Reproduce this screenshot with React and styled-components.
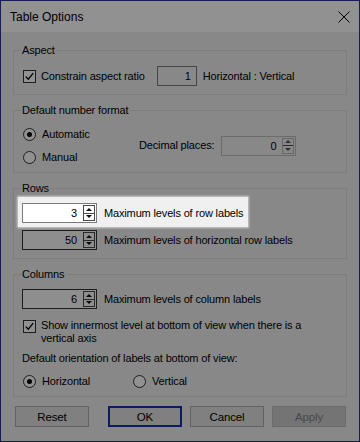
import styled, { createGlobalStyle } from "styled-components";

const GlobalStyle = createGlobalStyle`
  html, body {
    margin: 0;
    padding: 0;
    background: #f0f0f0;
  }
  body {
    font-family: "Liberation Sans", Arial, sans-serif;
    font-size: 11px;
    letter-spacing: -0.15px;
    color: #000;
  }
`;

const Dialog = styled.div`
  width: 360px;
  height: 442px;
  box-sizing: border-box;
  border: 1px solid #26349c;
  background: #f0f0f0;
  display: flex;
  flex-direction: column;
`;
const TitleBar = styled.div`
  height: 31px;
  background: #ffffff;
  display: flex;
  align-items: center;
  padding: 0 9px 0 9px;
  font-size: 12px;
  letter-spacing: 0;
  flex-shrink: 0;
`;
const Title = styled.div`
  flex: 1;
  padding-top: 1px;
`;
const CloseIcon = styled.svg`
  width: 12px;
  height: 12px;
`;
const Body = styled.div`
  flex: 1;
  padding: 11px 12px 0 12px;
  display: flex;
  flex-direction: column;
`;
const Group = styled.fieldset`
  margin: ${(p) => p.mt || 0}px 0 0 0;
  border: 1px solid #dcdcdc;
  padding: ${(p) => p.pt || 9}px 8px ${(p) => p.pb || 8}px 8px;
  min-width: 0;
`;
const Legend = styled.legend`
  padding: 0 1px;
  margin-left: -1px;
  line-height: 14px;
`;
const Row = styled.div`
  display: flex;
  align-items: ${(p) => (p.top ? "flex-start" : "center")};
  gap: ${(p) => p.gap || 0}px;
  margin-top: ${(p) => p.mt || 0}px;
  height: ${(p) => (p.h ? `${p.h}px` : "auto")};
`;
const Column = styled.div`
  width: ${(p) => p.w}px;
  flex-shrink: 0;
`;
const Check = styled.span`
  width: 11px;
  height: 11px;
  border: 1px solid #333;
  background: #fff;
  display: inline-flex;
  align-items: center;
  justify-content: center;
  flex-shrink: 0;
  margin-left: 1px;
  margin-right: 5px;
  margin-top: ${(p) => (p.top ? 1 : 0)}px;
`;
const Radio = styled.span`
  width: 11px;
  height: 11px;
  border: 1px solid #333;
  border-radius: 50%;
  background: #fff;
  display: inline-flex;
  align-items: center;
  justify-content: center;
  flex-shrink: 0;
  margin-left: ${(p) => p.ml || 1}px;
  margin-right: 6px;
  &::after {
    content: "";
    width: 5px;
    height: 5px;
    border-radius: 50%;
    background: ${(p) => (p.on ? "#000" : "transparent")};
  }
`;
const Label = styled.span`
  line-height: 13px;
  margin-left: ${(p) => p.ml || 0}px;
  white-space: nowrap;
`;
const Field = styled.div`
  width: ${(p) => p.w}px;
  height: 20px;
  box-sizing: border-box;
  border: 1px solid ${(p) => p.bd || "#7a7a7a"};
  background: ${(p) => p.bg || "#f0f0f0"};
  display: flex;
  align-items: center;
  justify-content: flex-end;
  padding: 0 ${(p) => p.pr || 5}px 0 0;
  margin-left: ${(p) => p.ml || 0}px;
  flex-shrink: 0;
`;
const Value = styled.span`
  margin-right: ${(p) => p.mr || 0}px;
`;
const Arrows = styled.div`
  width: 12px;
  height: 16px;
  box-sizing: border-box;
  border: 1px solid ${(p) => p.bd};
  display: flex;
  flex-direction: column;
`;
const ArrowHalf = styled.div`
  flex: 1;
  display: flex;
  align-items: center;
  justify-content: center;
  & + & {
    border-top: 1px solid ${(p) => p.bd};
  }
`;
const Tri = styled.span`
  width: 0;
  height: 0;
  border-left: 3px solid transparent;
  border-right: 3px solid transparent;
  ${(p) =>
    p.down
      ? `border-top: 3px solid ${p.c};`
      : `border-bottom: 3px solid ${p.c};`}
`;
const Spot = styled.div`
  position: relative;
  z-index: 1;
  display: flex;
  align-items: center;
  gap: 7px;
  background: #f0f0f0;
  margin: 0 0 0 -4px;
  padding: 6px 5px 4px 4px;
  width: fit-content;
  box-shadow: 0 0 2px 1px rgba(255, 255, 255, 0.6),
    0 0 0 3000px rgba(0, 0, 0, 0.43);
`;
const Footer = styled.div`
  display: flex;
  gap: 8px;
  padding: 9px 1px 0 1px;
`;
const Button = styled.button`
  width: 74px;
  height: 21px;
  box-sizing: border-box;
  font-family: inherit;
  font-size: 11.5px;
  letter-spacing: -0.15px;
  padding: 0;
  color: ${(p) => (p.disabled ? "#838383" : "#000")};
  background: ${(p) => (p.disabled ? "#cccccc" : "#e1e1e1")};
  border: ${(p) =>
    p.primary
      ? "2px solid #1c2fb0"
      : `1px solid ${p.disabled ? "#bfbfbf" : "#adadad"}`};
  margin-right: ${(p) => (p.push ? "auto" : "0")};
  margin-left: ${(p) => (p.push ? "1px" : "0")};
`;

const Spinner = ({ value, enabled = true, bg, bd, ml }) => {
  const line = enabled ? "#4a4a4a" : "#b5b5b5";
  const ink = enabled ? "#111" : "#555";
  return (
    <Field w={75} bg={bg} bd={bd} pr={1} ml={ml}>
      <Value mr={6}>{value}</Value>
      <Arrows bd={line}>
        <ArrowHalf bd={line}>
          <Tri c={ink} />
        </ArrowHalf>
        <ArrowHalf bd={line}>
          <Tri down c={ink} />
        </ArrowHalf>
      </Arrows>
    </Field>
  );
};

const CheckMark = () => (
  <svg width="9" height="9" viewBox="0 0 9 9">
    <path
      d="M0.8 4.6 L3.3 7.2 L8.2 1.2"
      fill="none"
      stroke="#000"
      strokeWidth="1.3"
    />
  </svg>
);

export default function App() {
  return (
    <>
      <GlobalStyle />
      <Dialog>
        <TitleBar>
          <Title>Table Options</Title>
          <CloseIcon viewBox="0 0 12 12">
            <path
              d="M0.5 0.5 L11.5 11.5 M11.5 0.5 L0.5 11.5"
              stroke="#000"
              strokeWidth="1"
            />
          </CloseIcon>
        </TitleBar>
        <Body>
          <Group pt={9} pb={8}>
            <Legend>Aspect</Legend>
            <Row>
              <Check>
                <CheckMark />
              </Check>
              <Label>Constrain aspect ratio</Label>
              <Field w={40} ml={12} pr={5}>
                <Value>1</Value>
              </Field>
              <Label ml={6}>Horizontal : Vertical</Label>
            </Row>
          </Group>

          <Group mt={8} pt={7} pb={5}>
            <Legend>Default number format</Legend>
            <Row>
              <Column w={117}>
                <Row h={20}>
                  <Radio on />
                  <Label>Automatic</Label>
                </Row>
                <Row h={20} mt={3}>
                  <Radio />
                  <Label>Manual</Label>
                </Row>
              </Column>
              <Label>Decimal places:</Label>
              <Spinner value="0" enabled={false} bd="#bcbcbc" ml={7} />
            </Row>
          </Group>

          <Group mt={8} pt={2} pb={8}>
            <Legend>Rows</Legend>
            <Spot>
              <Spinner value="3" bg="#ffffff" bd="#7a7a7a" />
              <Label>Maximum levels of row labels</Label>
            </Spot>
            <Row gap={7} mt={3}>
              <Spinner value="50" bg="#fafafa" bd="#333" />
              <Label>Maximum levels of horizontal row labels</Label>
            </Row>
          </Group>

          <Group mt={8} pt={8} pb={6}>
            <Legend>Columns</Legend>
            <Row gap={7}>
              <Spinner value="6" bg="#fafafa" bd="#333" />
              <Label>Maximum levels of column labels</Label>
            </Row>
            <Row mt={10} top>
              <Check top>
                <CheckMark />
              </Check>
              <Label>
                Show innermost level at bottom of view when there is a
                <br />
                vertical axis
              </Label>
            </Row>
            <Row mt={7}>
              <Label>Default orientation of labels at bottom of view:</Label>
            </Row>
            <Row mt={7} h={18}>
              <Radio on />
              <Label>Horizontal</Label>
              <Radio ml={43} />
              <Label>Vertical</Label>
            </Row>
          </Group>

          <Footer>
            <Button push>Reset</Button>
            <Button primary>OK</Button>
            <Button>Cancel</Button>
            <Button disabled>Apply</Button>
          </Footer>
        </Body>
      </Dialog>
    </>
  );
}
